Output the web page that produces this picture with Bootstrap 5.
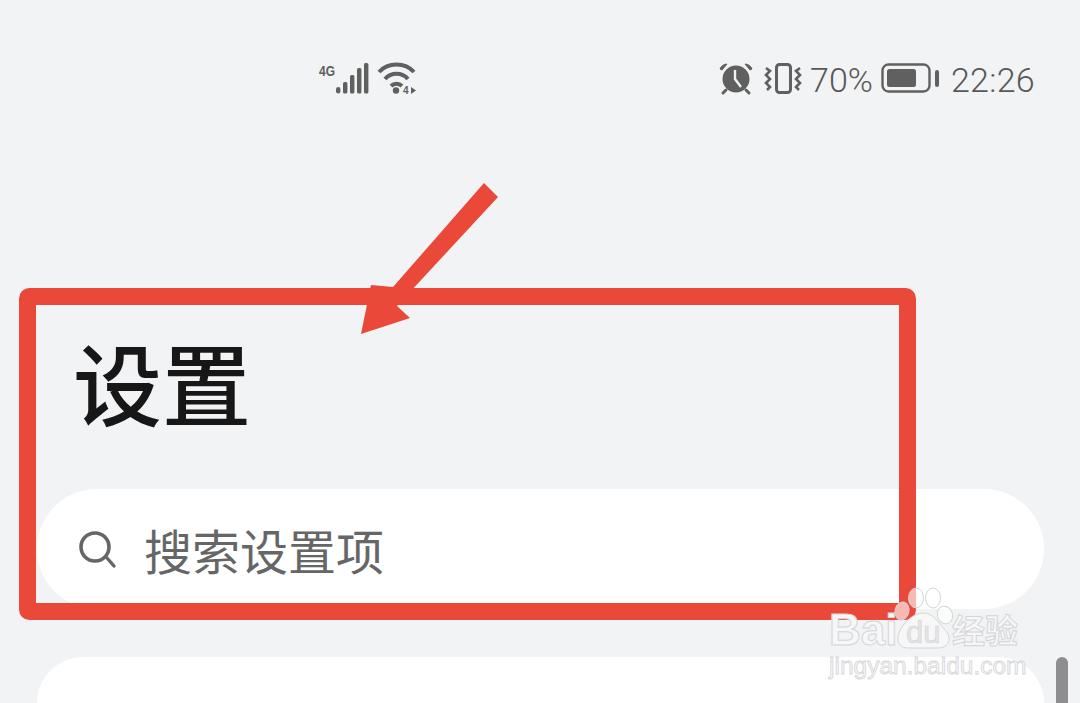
<!DOCTYPE html>
<html lang="zh-CN">
<head>
    <meta charset="UTF-8">
    <title>设置</title>
    <link href="https://cdn.jsdelivr.net/npm/bootstrap@5.3.0/dist/css/bootstrap.min.css" rel="stylesheet">
    <style>
        html, body { height: 703px; overflow: hidden; }
        body { background: #f1f3f5; font-family: Roboto, "Liberation Sans", "Noto Sans CJK SC", sans-serif; position: relative; }
        .status-row { height: 158px; padding: 60px 45px 0 318px; align-items: flex-start; }
        .status-text { font-size: 34px; line-height: 38px; color: #585858; font-weight: 300; margin-top: 1px; }
        .time-text { margin-left: 12px; letter-spacing: .3px; }
        .page-title { margin: 158px 0 0 73px; font-family: "Noto Sans CJK SC", sans-serif; font-size: 89px; line-height: 130px; height: 130px; font-weight: 500; color: #171717; }
        .search-pill { height: 120px; margin: 43px 36px 0 37px; background: #fff; border-radius: 60px; padding-left: 40px; }
        .search-label { font-family: "Noto Sans CJK SC", sans-serif; font-size: 48px; line-height: 60px; color: #666; margin-left: 27px; }
        .list-panel { height: 46px; margin: 48px 36px 0 37px; background: #fff; border-radius: 60px 60px 0 0; }
        .scroll-thumb { position: absolute; left: 1056px; top: 657px; width: 12px; height: 46px; background: #8e8e90; border-radius: 6px 6px 0 0; }
        .mark-layer { position: absolute; left: 0; top: 0; pointer-events: none; }
        .wm-box { position: absolute; left: 829px; top: 586px; width: 200px; height: 96px; color: #f7f7f8; }
        .wm-bai { position: absolute; left: 0; top: 21px; font-family: "Liberation Sans", sans-serif; font-size: 44px; line-height: 46px; font-weight: 700; -webkit-text-stroke: 1px #d4d5d7; }
        .wm-du { position: absolute; left: 77px; top: 30px; font-family: "Liberation Sans", sans-serif; font-size: 31px; line-height: 34px; color: #e4e5e6; -webkit-text-stroke: .6px #d4d5d7; }
        .wm-cn { position: absolute; left: 123px; top: 23px; font-family: "Noto Sans CJK SC", sans-serif; font-size: 33px; line-height: 40px; font-weight: 700; -webkit-text-stroke: 1px #d4d5d7; }
        .wm-url { position: absolute; left: 0; top: 65px; font-family: "Liberation Sans", sans-serif; font-size: 24.5px; line-height: 30px; -webkit-text-stroke: .8px #d4d5d7; }
    </style>
</head>
<body>
    <div class="status-row d-flex justify-content-between">
        <svg width="100" height="36" viewBox="0 0 100 36" fill="#606060">
            <text x="1" y="16" font-family="Liberation Sans, sans-serif" font-size="14" font-weight="700" textLength="16" lengthAdjust="spacingAndGlyphs">4G</text>
            <rect x="18" y="27" width="4.4" height="6.5" rx="2.2"/>
            <rect x="25" y="22" width="4.4" height="11.5" rx="1.5"/>
            <rect x="32" y="15" width="4.4" height="18.5" rx="1.5"/>
            <rect x="39" y="8" width="4.4" height="25.5" rx="1.5"/>
            <rect x="46" y="3" width="4.4" height="30.5" rx="1.5"/>
            <g fill="none" stroke="#606060" stroke-width="4" stroke-linecap="butt">
                <path d="M61 12 C70 2 87 2 96 12"/>
                <path d="M67 19 C73 12 84 12 90 19"/>
                <path d="M73 26 C76 23 81 23 84 26"/>
            </g>
            <circle cx="78" cy="30.5" r="3.2"/>
            <text x="85" y="34" font-family="Liberation Sans, sans-serif" font-size="10" font-weight="700">4</text>
            <path d="M93 27 L98 30.5 L93 34 Z"/>
        </svg>
        <div class="d-flex align-items-start">
            <svg width="36" height="36" viewBox="0 0 36 36">
                <circle cx="17" cy="19" r="13.5" fill="#606060"/>
                <path d="M16 10 V19 L22 27" fill="none" stroke="#f1f3f5" stroke-width="2.4"/>
                <path d="M1 9 C2 6 5 4 8 4 L3 10 Z M33 9 C32 6 29 4 26 4 L31 10 Z" fill="#606060" stroke="#606060"/>
                <path d="M7 30 L4 33 M27 30 L30 33" stroke="#606060" stroke-width="3" stroke-linecap="round"/>
            </svg>
            <svg width="39" height="36" viewBox="0 0 39 36" fill="none" stroke="#606060" class="ms-2 me-2">
                <rect x="13.5" y="4.5" width="14" height="28" rx="3" stroke-width="3"/>
                <path d="M3 8 L7 11 L3 15 L7 19 L3 23 L7 27 L4 30 M37 8 L33 11 L37 15 L33 19 L37 23 L33 27 L36 30" stroke-width="2.6"/>
            </svg>
            <span class="status-text">70%</span>
            <svg width="58" height="36" viewBox="0 0 58 36" class="ms-2">
                <rect x="1.5" y="4.5" width="47" height="27" rx="6" fill="none" stroke="#606060" stroke-width="2.4"/>
                <rect x="6" y="9" width="29" height="18" rx="2.5" fill="#606060"/>
                <rect x="54" y="10" width="4" height="17" rx="2" fill="#606060"/>
            </svg>
            <span class="status-text time-text">22:26</span>
        </div>
    </div>

    <h1 class="page-title">设置</h1>

    <div class="search-pill d-flex align-items-center">
        <svg width="40" height="40" viewBox="0 0 40 40" fill="none" stroke="#666">
            <circle cx="18" cy="18" r="14" stroke-width="3.6"/>
            <path d="M30 29 L37 37" stroke-width="3.4" stroke-linecap="round"/>
        </svg>
        <span class="search-label">搜索设置项</span>
    </div>

    <div class="list-panel"></div>
    <div class="scroll-thumb"></div>

    <!-- annotation drawn on the photo -->
    <svg class="mark-layer" width="1080" height="703" viewBox="0 0 1080 703">
        <rect x="27.5" y="296.5" width="880" height="315" rx="2" fill="none" stroke="#ea4838" stroke-width="17"/>
        <path d="M498 197 L484 183 L393 287 L371 285 L361 334 L410 318 L397 306 Z" fill="#ea4838"/>
        <g fill="#fff" fill-opacity=".62" stroke="#d4d5d7">
            <ellipse cx="902" cy="611" rx="7" ry="9" transform="rotate(15 902 611)"/>
            <ellipse cx="916" cy="598" rx="7.5" ry="10"/>
            <ellipse cx="933" cy="598" rx="7.5" ry="10"/>
            <ellipse cx="945" cy="615" rx="7.5" ry="9" transform="rotate(-20 945 615)"/>
        </g>
        <path d="M899 633 C903 622 914 613 923 613 C933 613 938 622 945 630 C953 638 949 648 938 648 L908 648 C899 648 896 641 899 633 Z" fill="#f7f7f8" stroke="#d4d5d7"/>
    </svg>
    <div class="wm-box">
        <span class="wm-bai">Bai</span>
        <span class="wm-du">du</span>
        <span class="wm-cn">经验</span>
        <span class="wm-url">jingyan.baidu.com</span>
    </div>
</body>
</html>
